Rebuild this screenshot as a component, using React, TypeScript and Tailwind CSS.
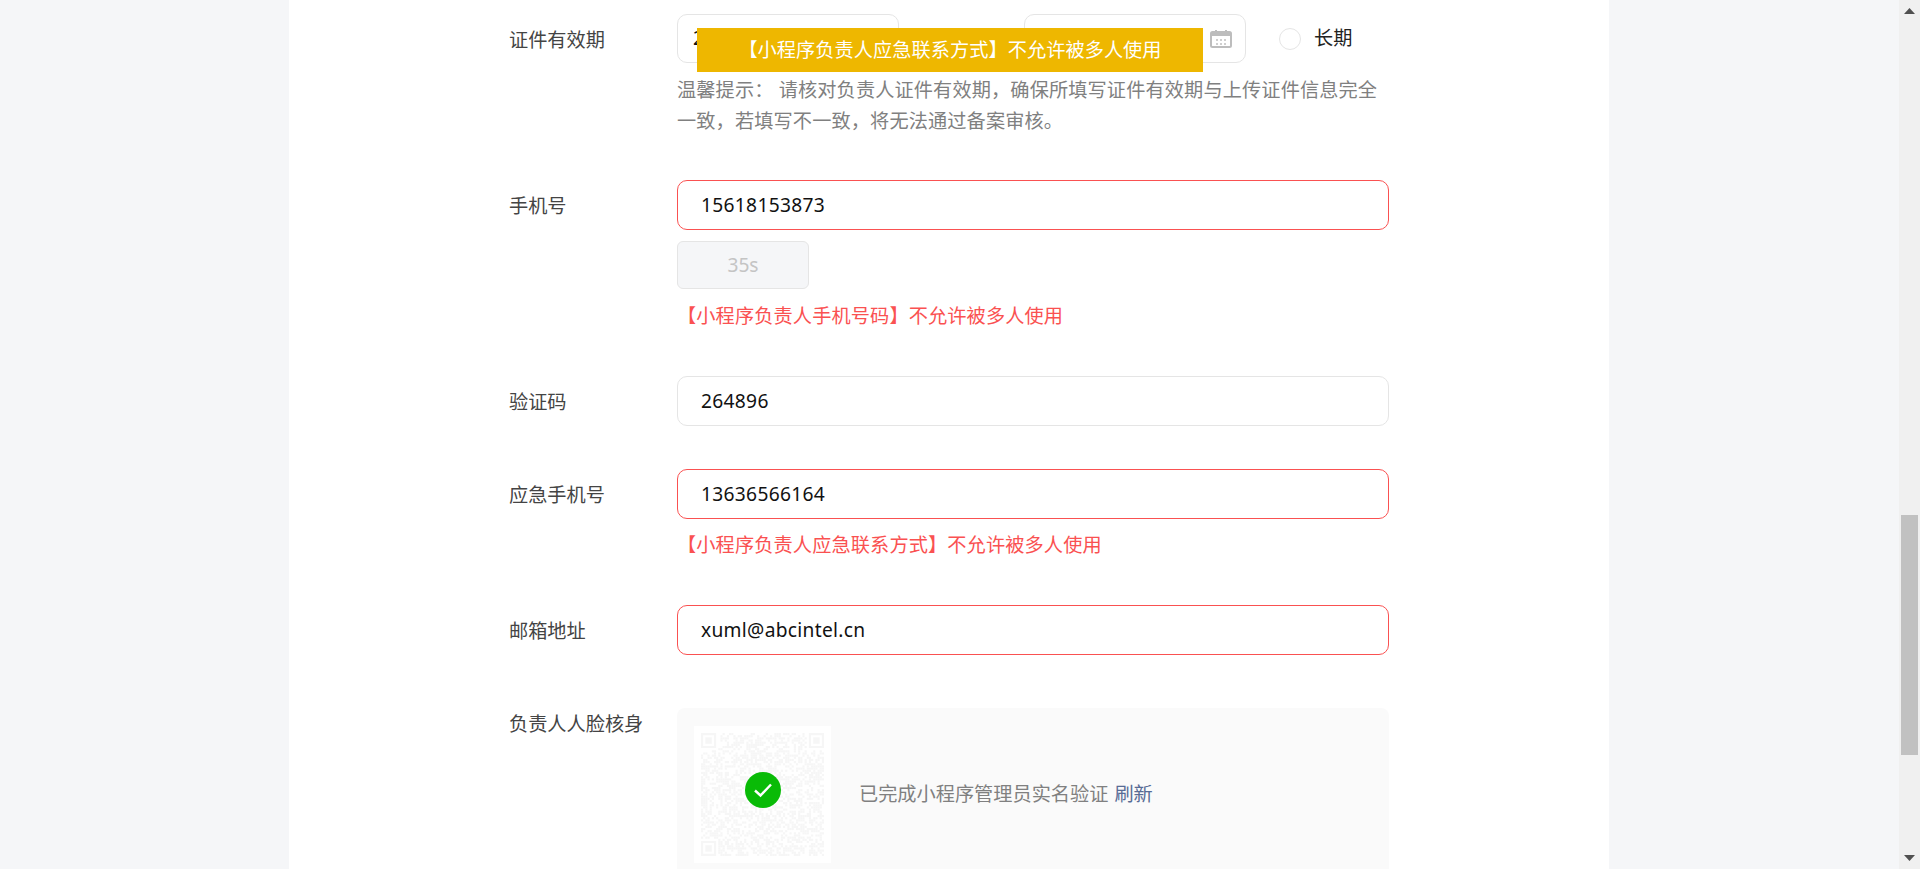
import React from 'react';

const FONT = 'font-["Noto_Sans","Noto_Sans_CJK_SC",sans-serif]';

// 低对比度二维码，只是背景装饰
function QrCode() {
  const n = 57;
  const cells: React.ReactNode[] = [];
  const inFinder = (x: number, y: number) =>
    (x < 8 && y < 8) || (x >= n - 8 && y < 8) || (x < 8 && y >= n - 8);
  let seed = 1337;
  for (let y = 0; y < n; y++) {
    for (let x = 0; x < n; x++) {
      seed = (seed * 1103515245 + 12345) & 0x7fffffff;
      if (inFinder(x, y)) continue;
      if ((seed >> 16) % 100 < 52) {
        cells.push(<rect key={`${x}-${y}`} x={x} y={y} width={1} height={1} />);
      }
    }
  }
  const finder = (x: number, y: number) => (
    <g key={`f${x}-${y}`}>
      <path d={`M${x} ${y}h7v7h-7zM${x + 1} ${y + 1}v5h5v-5z`} fillRule="evenodd" />
      <rect x={x + 2} y={y + 2} width={3} height={3} />
    </g>
  );
  return (
    <svg viewBox={`0 0 ${n} ${n}`} className="w-[123px] h-[123px]" fill="#f6f6f6">
      {cells}
      {finder(0, 0)}
      {finder(n - 7, 0)}
      {finder(0, n - 7)}
    </svg>
  );
}

function CalendarIcon() {
  return (
    <svg width="22" height="18" viewBox="0 0 22 18" fill="none">
      <rect x="1" y="2" width="20" height="15" rx="1.5" stroke="#bdbdbd" strokeWidth="2" />
      <path d="M1 3h20v3H1zM5 0h2v3H5zM15 0h2v3h-2z" fill="#bdbdbd" />
      <path d="M6 9h2v2H6zM10 9h2v2h-2zM14 9h2v2h-2zM6 13h2v2H6zM10 13h2v2h-2zM14 13h2v2h-2z" fill="#cfcfcf" />
    </svg>
  );
}

function Field({ value, error }: { value: string; error?: boolean }) {
  return (
    <div
      className={`w-[712px] h-[50px] rounded-[10px] border px-[23px] flex items-center text-[19.2px] tracking-[0.3px] text-[#111] bg-white ${
        error ? 'border-[#fa5151]' : 'border-[#e5e5e5]'
      }`}
    >
      {value}
    </div>
  );
}

function Row({
  label,
  className,
  labelClass,
  children,
}: {
  label: string;
  className?: string;
  labelClass?: string;
  children: React.ReactNode;
}) {
  return (
    <div className={`flex ${className ?? ''}`}>
      <div className={`w-[168px] shrink-0 text-[19.2px] text-[#444] ${labelClass ?? 'leading-[52px]'}`}>{label}</div>
      <div className="w-[712px]">{children}</div>
    </div>
  );
}

function ErrorText({ children }: { children: React.ReactNode }) {
  return <p className="text-[19.2px] leading-[32px] tracking-[0.12px] text-[#fa5151]">{children}</p>;
}

export default function App() {
  return (
    <div className={`relative flex h-[869px] overflow-hidden bg-[#f5f6f8] ${FONT}`}>
      <div className="flex-1 pl-[289px]">
        <div className="w-[1320px] h-full bg-white pl-[220px] pt-[14px]">
          <Row label="证件有效期" className="mb-[44px]">
            <div className="flex items-center">
              <div className="w-[222px] h-[49px] rounded-[10px] border border-[#e5e5e5] pl-[15px] flex items-center text-[19.2px] text-[#111]">
                2021-08-11
              </div>
              <div className="ml-[125px] w-[222px] h-[49px] rounded-[10px] border border-[#e5e5e5] pr-[13px] flex items-center justify-end">
                <CalendarIcon />
              </div>
              <div className="ml-[33px] w-[22px] h-[22px] rounded-full border border-[#e5e5e5]" />
              <span className="ml-[13px] text-[19.2px] text-[#222]">长期</span>
            </div>
            <p className="mt-[11px] text-[19.2px] leading-[31px] tracking-[0.12px] text-[#808080]">
              温馨提示： 请核对负责人证件有效期，确保所填写证件有效期与上传证件信息完全一致，若填写不一致，将无法通过备案审核。
            </p>
          </Row>

          <Row label="手机号" className="mb-[44px]">
            <Field value="15618153873" error />
            <div className="mt-[11px] w-[132px] h-[48px] rounded-[6px] border border-[#e5e5e5] bg-[#f5f6f8] flex items-center justify-center text-[19.2px] text-[#c4c4c4]">
              35s
            </div>
            <div className="mt-[11px]">
              <ErrorText>【小程序负责人手机号码】不允许被多人使用</ErrorText>
            </div>
          </Row>

          <Row label="验证码" className="mb-[41px]">
            <Field value="264896" />
          </Row>

          <Row label="应急手机号" className="mb-[44px]">
            <Field value="13636566164" error />
            <div className="mt-[10px]">
              <ErrorText>【小程序负责人应急联系方式】不允许被多人使用</ErrorText>
            </div>
          </Row>

          <Row label="邮箱地址" className="mb-[51px]">
            <Field value="xuml@abcintel.cn" error />
          </Row>

          <Row label="负责人人脸核身" labelClass="leading-[32px]">
            <div className="h-[180px] rounded-[8px] bg-[#fafafa] pl-[17px] pt-[18px] flex items-start">
              <div className="relative w-[137px] h-[137px] bg-white flex items-center justify-center">
                <QrCode />
                <div className="absolute left-[51px] top-[46px] w-[36px] h-[36px] rounded-full bg-[#09bb07] flex items-center justify-center">
                  <svg width="20" height="16" viewBox="0 0 20 16" fill="none" stroke="#fff" strokeWidth="2.4">
                    <path d="M2 8.5 7.5 13.5 18 2.5" />
                  </svg>
                </div>
              </div>
              <p className="ml-[28px] h-[137px] flex items-center text-[19.2px] text-[#808080] gap-[6px]">
                已完成小程序管理员实名验证<span className="text-[#576b95]">刷新</span>
              </p>
            </div>
          </Row>
        </div>
      </div>

      {/* 滚动条 */}
      <div className="w-[21px] shrink-0 bg-[#f0f0f0] flex flex-col items-center">
        <svg className="mt-[8px]" width="11" height="6" viewBox="0 0 11 6" fill="#505050">
          <path d="M5.5 0 11 6H0z" />
        </svg>
        <div className="mt-[501px] w-[17px] h-[240px] bg-[#c1c1c1]" />
        <svg className="mt-[100px]" width="11" height="6" viewBox="0 0 11 6" fill="#505050">
          <path d="M0 0h11L5.5 6z" />
        </svg>
      </div>

      {/* toast */}
      <div className="absolute left-[697px] top-[28px] w-[506px] h-[44px] bg-[#eeb700] flex items-center justify-center text-[19.2px] tracking-[0.05px] text-white">
        【小程序负责人应急联系方式】不允许被多人使用
      </div>
    </div>
  );
}
